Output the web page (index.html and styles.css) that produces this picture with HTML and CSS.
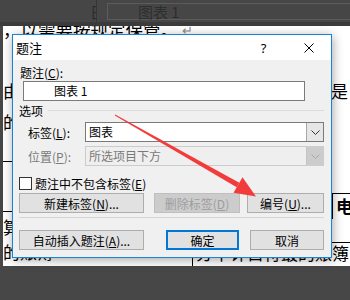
FILE: index.html
```html
<!DOCTYPE html>
<html lang="zh-CN">
<head>
    <meta charset="UTF-8">
    <meta name="viewport" content="width=device-width, initial-scale=1.0">
    <title>题注</title>
    <link rel="stylesheet" href="styles.css">
</head>
<body>
    <div class="screen">
        <div class="topbar">
            <span class="tb-char">日</span>
            <span class="tb-rule"></span>
            <div class="tb-cell">图表 1</div>
        </div>

        <div class="page">
            <div class="doc-row row-a">，以需要按规定保管。<span class="para">↵</span></div>
            <div class="doc-row row-b"><span>由</span><span class="edge-r">是</span></div>
            <div class="doc-row row-c"><span>的</span></div>
            <div class="doc-row row-d"><span class="rule-l"></span></div>
            <div class="doc-row row-e">
                <span class="rule-l"></span>
                <span class="cell-r">电算</span>
            </div>
            <div class="doc-row row-f"><span>算</span></div>
            <div class="doc-row row-g">
                <span>的账簿</span>
                <span class="cell-b">分中计目符最的账簿</span>
            </div>
        </div>

        <div class="dialog">
            <div class="titlebar">
                <span class="title">题注</span>
                <span class="tbtn help">?</span>
                <span class="tbtn">
                    <svg width="10" height="10" viewBox="0 0 10 10">
                        <path d="M0.5 0.5 L9.5 9.5 M9.5 0.5 L0.5 9.5" stroke="#000" stroke-width="1" fill="none"/>
                    </svg>
                </span>
            </div>
            <div class="body">
                <div class="lbl-top">题注(<u>C</u>):</div>
                <div class="caption-box">图表 1</div>
                <div class="group"><span>选项</span><span class="group-line"></span></div>

                <div class="field first">
                    <span class="field-lbl">标签(<u>L</u>):</span>
                    <div class="combo">
                        <span class="combo-text">图表</span>
                        <span class="drop">
                            <svg width="9" height="5" viewBox="0 0 9 5">
                                <polyline points="0.5,0.5 4.5,4.5 8.5,0.5" stroke="#333" fill="none"/>
                            </svg>
                        </span>
                    </div>
                </div>
                <div class="field disabled">
                    <span class="field-lbl">位置(<u>P</u>):</span>
                    <div class="combo">
                        <span class="combo-text">所选项目下方</span>
                        <span class="drop">
                            <svg width="9" height="5" viewBox="0 0 9 5">
                                <polyline points="0.5,0.5 4.5,4.5 8.5,0.5" stroke="#a8a8a8" fill="none"/>
                            </svg>
                        </span>
                    </div>
                </div>

                <div class="check"><span class="box"></span>题注中不包含标签(<u>E</u>)</div>

                <div class="btn-row">
                    <button class="btn w-new">新建标签(<u>N</u>)...</button>
                    <button class="btn w-del" disabled>删除标签(<u>D</u>)</button>
                    <button class="btn w-num">编号(<u>U</u>)...</button>
                </div>
                <div class="sep"></div>
                <div class="btn-row last">
                    <button class="btn w-auto">自动插入题注(<u>A</u>)...</button>
                    <button class="btn w-ok">确定</button>
                    <button class="btn w-cancel">取消</button>
                </div>
            </div>
        </div>

        <svg class="arrow" width="350" height="300" viewBox="0 0 350 300">
            <polygon points="114.8,115.4 115.2,114.6 239.3,182.8 236.7,187.2" fill="#f23c3c"/>
            <polygon points="233.5,192.8 242.5,177.2 256,196.5" fill="#f23c3c"/>
        </svg>
    </div>
</body>
</html>
```

FILE: styles.css
```css
* {
    box-sizing: border-box;
}
body {
    margin: 0;
}
.screen {
    position: relative;
    width: 350px;
    height: 300px;
    overflow: hidden;
    background: #474747;
    font-family: "Noto Sans CJK SC", "Noto Sans", sans-serif;
}

/* dimmed ribbon strip at the top */
.topbar {
    display: flex;
    height: 26px;
    padding-left: 90px;
    background: #464646;
    border-bottom: 4px solid #3b3b3b;
    color: #2b2b2b;
    font-size: 15px;
}
.topbar .tb-char {
    width: 6px;
    overflow: hidden;
    padding-top: 3px;
    line-height: 17px;
}
.topbar .tb-rule {
    width: 1px;
    background: #363636;
}
.topbar .tb-cell {
    flex: 1;
    height: 17px;
    margin: 3px 0 0 10px;
    padding-left: 30px;
    border: 1px solid #5c5c5c;
    border-right: none;
    line-height: 15px;
    color: #2e2e2e;
}

/* document page behind the dialog */
.page {
    height: 240px;
    margin-left: 3px;
    background: #fff;
    overflow: hidden;
    font-size: 17px;
    color: #000;
}
.page .doc-row {
    display: flex;
    justify-content: space-between;
    height: 20px;
    line-height: 20px;
    white-space: nowrap;
}
.page .row-a {
    justify-content: flex-start;
    margin-top: -6px;
    font-size: 17.5px;
}
.page .para {
    margin-left: 4px;
    font-size: 13px;
    color: #8a8a8a;
}
.page .row-b {
    margin-top: 41px;
}
.page .edge-r {
    padding-right: 2px;
}
.page .row-c {
    margin-top: 11px;
}
.page .row-d {
    height: 1px;
    margin-top: 29px;
}
.page .rule-l {
    width: 9px;
    height: 1px;
    background: #000;
}
.page .row-e {
    height: 26px;
    margin-top: 31px;
    align-items: flex-start;
}
.page .row-e .rule-l {
    margin-top: 18px;
}
.page .cell-r {
    width: 18px;
    height: 26px;
    padding-left: 3px;
    border-top: 1px solid #000;
    border-left: 1px solid #000;
    overflow: hidden;
    font-weight: 700;
    line-height: 24px;
}
.page .row-f {
    margin-top: -2px;
}
.page .row-g {
    margin-top: 5px;
    height: 24px;
}
.page .cell-b {
    width: 158px;
    padding-left: 3px;
    border-top: 1px solid #000;
    border-left: 1px solid #000;
    overflow: hidden;
}

/* the caption dialog */
.dialog {
    position: absolute;
    left: 12px;
    top: 34px;
    width: 320px;
    height: 224px;
    display: flex;
    flex-direction: column;
    border: 1px solid #1883d7;
    background: #f0f0f0;
    box-shadow: 1px 2px 10px rgba(0, 0, 0, .35);
    font-size: 12px;
    color: #000;
}
.dialog .titlebar {
    display: flex;
    align-items: center;
    height: 25px;
    padding-left: 3px;
    background: #fff;
}
.dialog .title {
    flex: 1;
    font-size: 13px;
}
.dialog .tbtn {
    display: flex;
    align-items: center;
    justify-content: center;
    width: 45px;
    height: 25px;
}
.dialog .help {
    font-family: "Noto Sans", sans-serif;
    font-size: 13px;
}
.dialog .body {
    flex: 1;
    display: flex;
    flex-direction: column;
    padding: 4px 7px 7px 6px;
}
.dialog u {
    text-underline-offset: 1px;
}
.dialog .lbl-top {
    height: 17px;
    padding-left: 1px;
    line-height: 17px;
}
.dialog .caption-box {
    width: 282px;
    height: 20px;
    margin-left: 4px;
    padding-left: 30px;
    border: 1px solid #7a7a7a;
    background: #fff;
    line-height: 18px;
}
.dialog .group {
    display: flex;
    align-items: center;
    height: 18px;
}
.dialog .group-line {
    flex: 1;
    height: 1px;
    margin-left: 5px;
    background: #dcdcdc;
}
.dialog .field {
    display: flex;
    align-items: center;
    height: 20px;
    margin-top: 4px;
}
.dialog .field.first {
    margin-top: 3px;
}
.dialog .field-lbl {
    width: 66px;
    padding-left: 9px;
}
.dialog .combo {
    flex: 1;
    display: flex;
    align-items: stretch;
    height: 20px;
    border: 1px solid #7a7a7a;
    background: #fff;
}
.dialog .combo-text {
    flex: 1;
    padding-left: 3px;
    line-height: 18px;
}
.dialog .drop {
    display: flex;
    align-items: center;
    justify-content: center;
    width: 17px;
    border-left: 1px solid #a8a8a8;
    background: #e6e6e6;
}
.dialog .field.disabled {
    color: #7a7a7a;
}
.dialog .field.disabled .combo {
    border-color: #cccccc;
    background: #efefef;
}
.dialog .field.disabled .drop {
    border-left-color: #c4c4c4;
    background: #cccccc;
}
.dialog .check {
    display: flex;
    align-items: center;
    height: 14px;
    margin-top: 10px;
}
.dialog .box {
    width: 13px;
    height: 13px;
    margin-right: 3px;
    border: 1px solid #333;
    background: #fff;
}
.dialog .btn-row {
    display: flex;
    height: 20px;
    margin-top: 3px;
}
.dialog .btn-row.last {
    margin-top: 12px;
}
.dialog .btn {
    height: 20px;
    padding: 0;
    border: 1px solid #adadad;
    background: #e1e1e1;
    font: inherit;
    line-height: 17px;
    color: #000;
    text-align: center;
}
.dialog .w-new,
.dialog .w-auto {
    width: 125px;
}
.dialog .w-del {
    width: 86px;
    margin-left: 10px;
    border-color: #bfbfbf;
    background: #cccccc;
    color: #9d9d9d;
}
.dialog .w-num {
    width: 77px;
    margin-left: 7px;
}
.dialog .w-ok {
    width: 73px;
    margin-left: 22px;
    border: 2px solid #0078d7;
    line-height: 15px;
}
.dialog .w-cancel {
    width: 74px;
    margin-left: 11px;
}
.dialog .sep {
    height: 1px;
    margin-top: 4px;
    background: #d5d5d5;
}

/* red annotation arrow drawn on top */
.arrow {
    position: absolute;
    left: 0;
    top: 0;
    pointer-events: none;
}
```
